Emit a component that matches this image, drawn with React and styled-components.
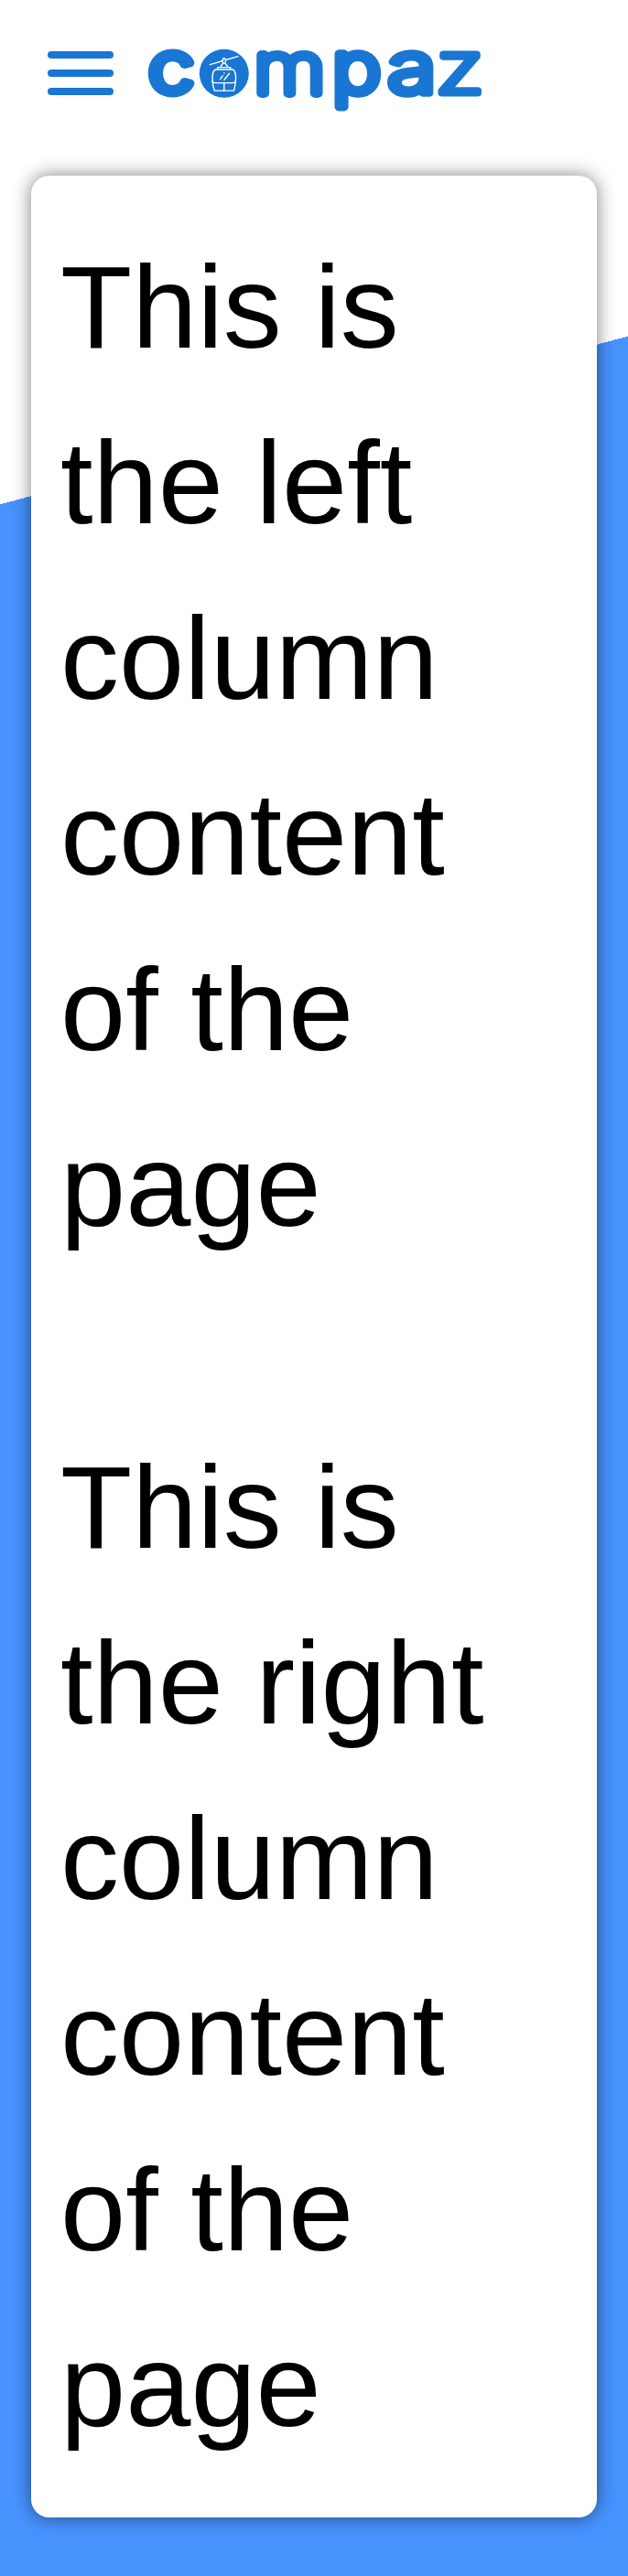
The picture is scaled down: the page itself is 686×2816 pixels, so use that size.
import React from 'react';
import styled, { createGlobalStyle } from 'styled-components';

const GlobalStyle = createGlobalStyle`
  body {
    margin: 0;
    font-family: 'Liberation Sans', Arial, sans-serif;
    color: #000;
  }
`;

const Page = styled.div`
  box-sizing: border-box;
  min-height: 2816px;
  padding-bottom: 64px;
  background: linear-gradient(165deg, #fff 532.6px, #4793ff 532.6px);
`;

const Header = styled.header`
  box-sizing: border-box;
  display: flex;
  align-items: center;
  gap: 26px;
  height: 160px;
  margin-bottom: 32px;
  padding: 0 52px;
`;

const MenuButton = styled.button`
  display: flex;
  flex: none;
  flex-direction: column;
  gap: 12px;
  width: 72px;
  padding: 0;
  border: 0;
  background: none;
`;

const MenuBar = styled.span`
  height: 8px;
  border-radius: 4px;
  background: #1976d2;
`;

const LogoSvg = styled.svg`
  display: block;
  flex: none;
  width: 390px;
  height: 140px;
  overflow: visible;
`;

const LogoLetter = styled.text`
  font-family: Inter, sans-serif;
  font-weight: ${(p) => p.$weight};
  font-size: ${(p) => p.$size}px;
  fill: #1976d2;
  stroke: #1976d2;
  stroke-width: ${(p) => p.$outline}px;
  stroke-linejoin: round;
  stroke-linecap: round;
`;

const Card = styled.main`
  display: flex;
  flex-direction: column;
  gap: 160px;
  margin: 0 34px;
  padding: 48px 32px;
  border-radius: 20px;
  background: #fff;
  box-shadow: 0 0 20px rgba(0, 0, 0, 0.5);
`;

const Column = styled.section`
  max-width: 500px;
  font-size: 128px;
  line-height: 192px;
`;

const letters = [
  { char: 'c', x: 161.9, y: 101.4, stretch: 1.15, size: 77.8, weight: 300, outline: 9 },
  { char: 'm', x: 277.6, y: 101.9, stretch: 1.178, size: 76.3, weight: 100, outline: 10 },
  { char: 'p', x: 362.9, y: 101.4, stretch: 1.165, size: 76.8, weight: 200, outline: 9.6 },
  { char: 'a', x: 423.1, y: 101.9, stretch: 1.22, size: 80.4, weight: 300, outline: 7.6 },
  { char: 'z', x: 475.8, y: 101.8, stretch: 1.26, size: 79, weight: 200, outline: 7 },
];

function Logo() {
  return (
    <LogoSvg viewBox="150 10 390 140" role="img" aria-label="compaz">
      {letters.map((l) => (
        <LogoLetter
          key={l.char}
          $size={l.size}
          $weight={l.weight}
          $outline={l.outline}
          transform={`translate(${l.x} ${l.y}) scale(${l.stretch} 1)`}
        >
          {l.char}
        </LogoLetter>
      ))}
      <ellipse cx="244.8" cy="80.3" rx="27" ry="26.5" fill="#1976d2" />
      <g fill="none" stroke="#fff" strokeWidth="1.4" strokeLinecap="round" strokeLinejoin="round">
        <path d="M229.4 70.7 260 61.6" />
        <rect x="243.4" y="63.8" width="2.8" height="5.6" rx="1.2" fill="#1976d2" />
        <path d="M243.2 69.8Q241.4 71 241.2 73.4M246.4 69.8Q248.4 71 248.6 73.4" />
        <path d="M237.6 76V73.6H251.8V76" />
        <path d="M235.8 76H253.8Q256.2 76.4 257 80Q258.6 89 255.4 99.1H234.2Q230.8 89 232.6 80Q233.4 76.4 235.8 76Z" />
        <path d="M231.9 88.8Q233 90.6 235 90.6H254.4Q256.6 90.6 257.5 88.8M244.8 90.8V99" />
        <path d="M240.8 86.4 243.2 82.8M244.9 87.2 250.6 80.2M244.9 79.8V80" />
      </g>
    </LogoSvg>
  );
}

export default function App() {
  return (
    <>
      <GlobalStyle />
      <Page>
        <Header>
          <MenuButton aria-label="Menu">
            <MenuBar />
            <MenuBar />
            <MenuBar />
          </MenuButton>
          <Logo />
        </Header>
        <Card>
          <Column>This is the left column content of the page</Column>
          <Column>This is the right column content of the page</Column>
        </Card>
      </Page>
    </>
  );
}
